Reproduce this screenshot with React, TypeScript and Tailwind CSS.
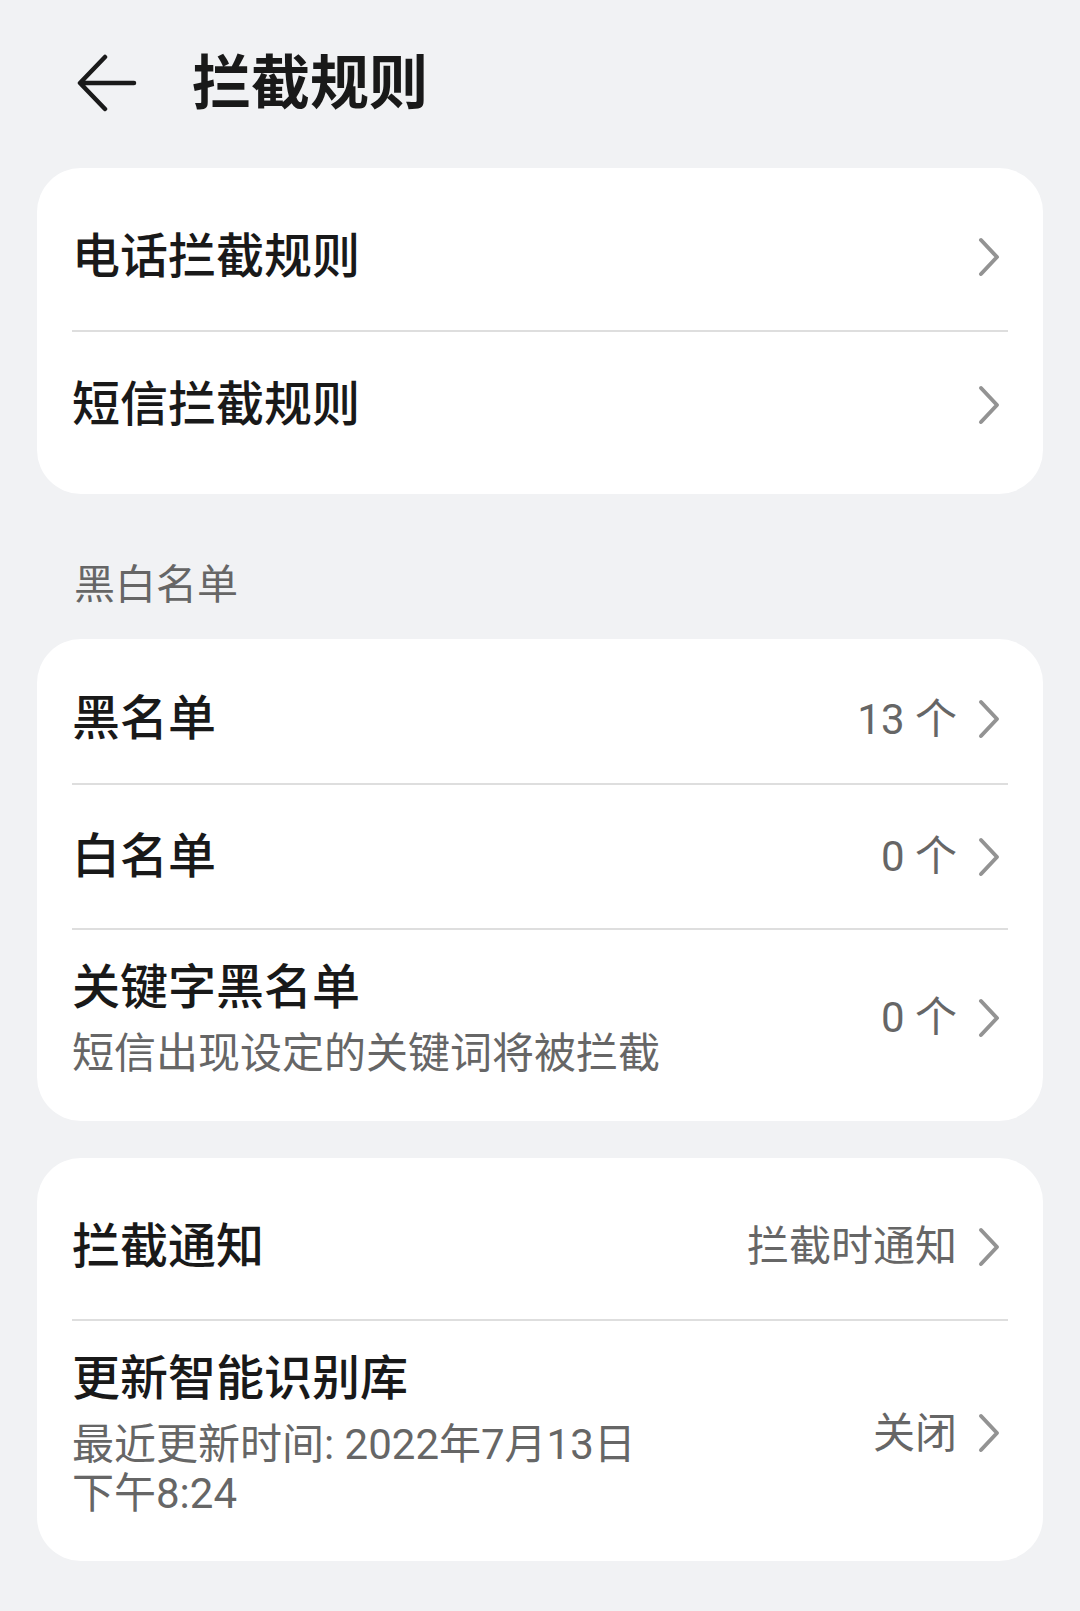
import React from "react";

const FONT = {
  fontFamily: '"Roboto", "Noto Sans CJK SC", sans-serif',
};

function Chevron() {
  return (
    <svg width="24" height="40" viewBox="0 0 24 40" className="shrink-0">
      <path
        d="M4 3 L20 20 L4 37"
        fill="none"
        stroke="#939393"
        strokeWidth="4"
        strokeLinecap="round"
        strokeLinejoin="round"
      />
    </svg>
  );
}

function Divider() {
  return <div className="h-[2px] bg-[#dedede]" />;
}

interface RowProps {
  title: string;
  sub?: React.ReactNode;
  value?: string;
  h: string;
}

function Row({ title, sub, value, h }: RowProps) {
  return (
    <div className={`flex items-center justify-between ${h}`}>
      <div className="flex flex-col">
        <div className="text-[48px] font-medium leading-[62px] text-[#191919]">
          {title}
        </div>
        {sub && (
          <div className="mt-[10px] text-[42px] leading-[49px] text-[#666]">
            {sub}
          </div>
        )}
      </div>
      <div className="flex items-center gap-[20px] pr-[7px]">
        {value && (
          <span className="text-[42px] leading-[49px] text-[#666]">
            {value}
          </span>
        )}
        <Chevron />
      </div>
    </div>
  );
}

export default function App() {
  return (
    <div
      className="min-h-[1611px] w-[1080px] bg-[#f1f2f4] px-[37px]"
      style={FONT}
    >
      {/* header */}
      <div className="flex h-[168px] items-center gap-[55px] pl-[40px] pb-[2px]">
        <svg width="60" height="58" viewBox="0 0 60 58">
          <path
            d="M57 29 H4 M28 3 L3 29 L28 55"
            fill="none"
            stroke="#1a1a1a"
            strokeWidth="4.5"
            strokeLinecap="round"
            strokeLinejoin="round"
          />
        </svg>
        <h1 className="text-[59px] font-bold leading-none text-[#191919]">
          拦截规则
        </h1>
      </div>

      <div className="rounded-[44px] bg-white px-[35px] py-[16px]">
        <Row title="电话拦截规则" h="h-[146px]" />
        <Divider />
        <Row title="短信拦截规则" h="h-[146px]" />
      </div>

      <div className="flex h-[145px] items-center pl-[37px] pt-[38px] text-[41px] text-[#666]">
        黑白名单
      </div>

      <div className="rounded-[44px] bg-white px-[35px] py-[16px]">
        <Row title="黑名单" value="13 个" h="h-[128px]" />
        <Divider />
        <Row title="白名单" value="0 个" h="h-[143px]" />
        <Divider />
        <Row
          title="关键字黑名单"
          sub="短信出现设定的关键词将被拦截"
          value="0 个"
          h="h-[175px]"
        />
      </div>

      <div className="h-[37px]" />

      <div className="rounded-[44px] bg-white px-[35px] py-[16px]">
        <Row title="拦截通知" value="拦截时通知" h="h-[145px]" />
        <Divider />
        <Row
          title="更新智能识别库"
          sub={
            <>
              最近更新时间: 2022年7月13日
              <br />
              下午8:24
            </>
          }
          value="关闭"
          h="h-[224px]"
        />
      </div>
    </div>
  );
}
